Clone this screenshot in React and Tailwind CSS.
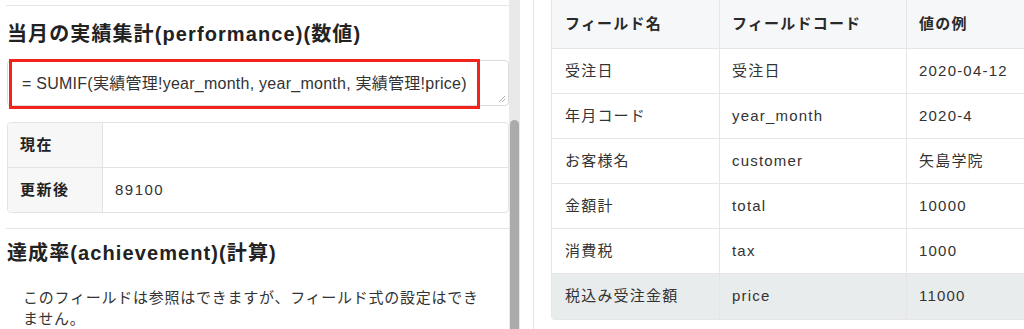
import React from "react";

const rows = [
  ["受注日", "受注日", "2020-04-12"],
  ["年月コード", "year_month", "2020-4"],
  ["お客様名", "customer", "矢島学院"],
  ["金額計", "total", "10000"],
  ["消費税", "tax", "1000"],
  ["税込み受注金額", "price", "11000"],
];

export default function App() {
  return (
    <div className="flex h-[329px] w-[1024px] overflow-hidden bg-white text-[#333] font-['Liberation_Sans','Noto_Sans_CJK_JP',sans-serif]">
      {/* Left panel */}
      <div className="w-[509px] flex-none pt-[5px] pl-[6px]">
        <section className="border-t border-[#e6e6e6] pt-[15px] pl-[1px]">
          <h2 className="h-[26px] text-[20px] leading-[26px] font-bold tracking-[0.055em] text-[#222]">
            当月の実績集計(performance)(数値)
          </h2>
          <div className="relative mt-[13px] h-[46px] rounded-[4px] border border-[#dcdcdc] bg-white">
            <div className="pl-[14px] pt-[12px] text-[16px] leading-[22px] tracking-[0.016em] text-[#333]">
              = SUMIF(実績管理!year_month, year_month, 実績管理!price)
            </div>
            <svg className="absolute bottom-[3px] right-[3px]" width="7" height="7" viewBox="0 0 7 7">
              <path d="M1 7 L7 1 M4 7 L7 4" stroke="#9a9a9a" strokeWidth="0.8" />
            </svg>
            <div className="absolute left-[1px] top-[-2px] h-[50px] w-[471px] border-[3px] border-[#f2231a]" />
          </div>
          <div className="mt-[16px] overflow-hidden rounded-[4px] border border-[#e3e3e3] text-[15px] tracking-[0.1em]">
            <div className="flex h-[45px] border-b border-[#e3e3e3]">
              <div className="flex w-[95px] flex-none items-center border-r border-[#e3e3e3] bg-[#f7f7f7] pl-[12px] font-bold text-[#222]">
                現在
              </div>
              <div className="flex-1" />
            </div>
            <div className="flex h-[44px]">
              <div className="flex w-[95px] flex-none items-center border-r border-[#e3e3e3] bg-[#f7f7f7] pl-[12px] font-bold text-[#222]">
                更新後
              </div>
              <div className="flex flex-1 items-center pl-[12px]">89100</div>
            </div>
          </div>
        </section>
        <section className="mt-[15px] border-t border-[#e6e6e6] pt-[11px] pl-[1px]">
          <h2 className="h-[26px] text-[20px] leading-[26px] font-bold tracking-[0.055em] text-[#222]">
            達成率(achievement)(計算)
          </h2>
          <p className="mt-[21px] pl-[16px] text-[15px] leading-[21px] tracking-[0.05em] text-[#333]">
            このフィールドは参照はできますが、フィールド式の設定はでき
            <br />
            ません。
          </p>
        </section>
      </div>

      {/* Scrollbar */}
      <div className="flex w-[11px] flex-none flex-col bg-[#e9e9e9]">
        <div className="h-[120px] flex-none" />
        <div className="mx-[1px] flex-1 rounded-t-full bg-[#ababab]" />
      </div>

      <div className="w-[13px] flex-none" />

      {/* Right panel */}
      <div className="min-w-0 flex-1 border-l border-[#e4e4e4] pl-[17px]">
        <div className="w-[520px] overflow-hidden rounded-b-[4px] border-x border-b border-[#e6e6e6] text-[15px] tracking-[0.08em]">
          <div className="flex h-[49px] border-b border-[#e6e6e6] bg-[#f6f7f9] font-bold text-[#2a2a2a]">
            <div className="flex w-[168px] flex-none items-center border-r border-[#e6e6e6] pl-[13px]">フィールド名</div>
            <div className="flex w-[187px] flex-none items-center border-r border-[#e6e6e6] pl-[12px]">フィールドコード</div>
            <div className="flex flex-1 items-center pl-[12px]">値の例</div>
          </div>
          {rows.map((r, i) => (
            <div
              key={i}
              className={
                i === rows.length - 1
                  ? "flex h-[45px] bg-[#e9eced]"
                  : "flex h-[45px] border-b border-[#e6e6e6]"
              }
            >
              <div className="flex w-[168px] flex-none items-center border-r border-[#e6e6e6] pl-[13px]">{r[0]}</div>
              <div className="flex w-[187px] flex-none items-center border-r border-[#e6e6e6] pl-[12px]">{r[1]}</div>
              <div className="flex flex-1 items-center pl-[12px]">{r[2]}</div>
            </div>
          ))}
        </div>
      </div>
    </div>
  );
}
